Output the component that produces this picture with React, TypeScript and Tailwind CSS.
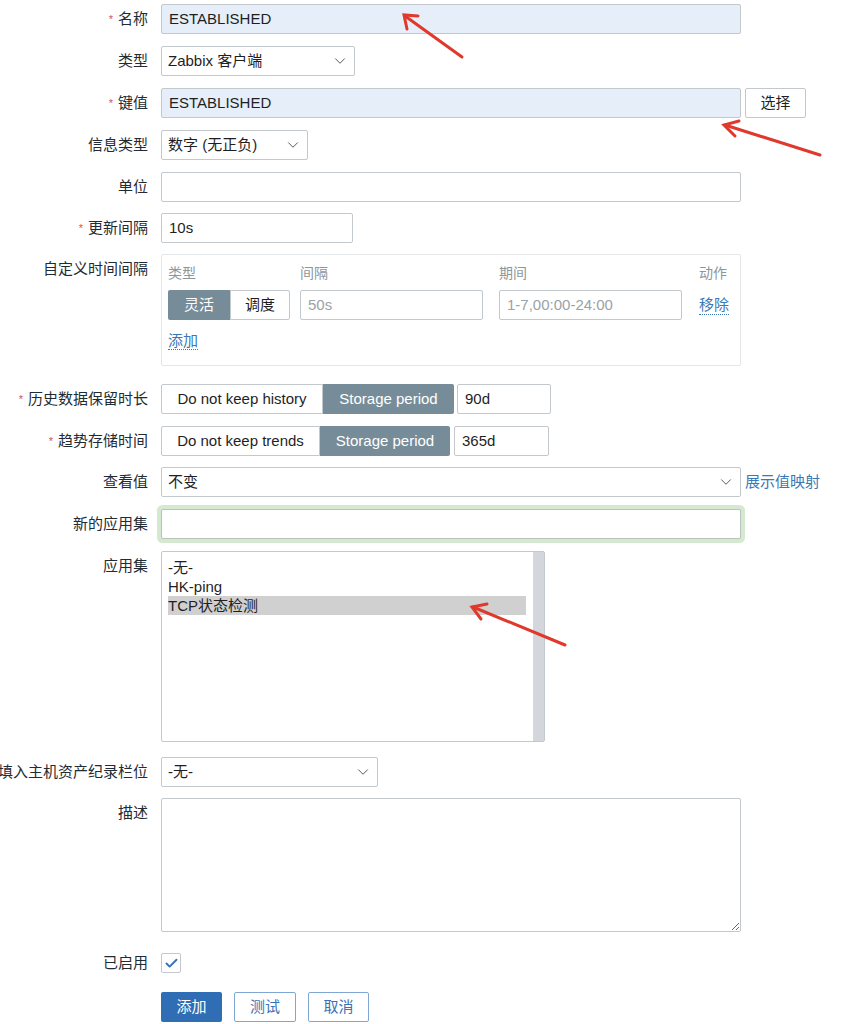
import { ChevronDown, Check } from 'lucide-react';
import type { ReactNode } from 'react';

const font = { fontFamily: '"Liberation Sans", "Noto Sans CJK SC", Arial, sans-serif' };

function Row({ label, required, className, children, labelLeading = 'leading-[30px]' }: {
  label: string;
  required?: boolean;
  className?: string;
  children: ReactNode;
  labelLeading?: string;
}) {
  return (
    <div className={`flex items-start ${className ?? ''}`}>
      <div className={`w-[148px] shrink-0 flex justify-end ${labelLeading}`}>
        <span className="shrink-0 whitespace-nowrap text-[15px] text-[#1f2c33]">
          {required && <span className="text-[#d9534f] text-[11px] align-top mr-[5px]">*</span>}
          {label}
        </span>
      </div>
      <div className="ml-[13px] flex items-start">{children}</div>
    </div>
  );
}

function Box({ w, blue, children, className }: { w: string; blue?: boolean; children?: ReactNode; className?: string }) {
  return (
    <div
      className={`${w} h-[30px] border border-[#c3c8cd] rounded-[2px] px-[7px] flex items-center text-[15px] text-[#1f1f1f] ${blue ? 'bg-[#e6eefa]' : 'bg-white'} ${className ?? ''}`}
    >
      {children}
    </div>
  );
}

function Select({ w, value }: { w: string; value: string }) {
  return (
    <div className={`${w} h-[30px] border border-[#c3c8cd] rounded-[2px] pl-[6px] pr-[5px] flex items-center justify-between bg-white text-[15px] text-[#1f1f1f]`}>
      <span>{value}</span>
      <ChevronDown size={18} strokeWidth={1.3} className="text-[#555]" />
    </div>
  );
}

function Segmented({ left, right, leftW, rightW }: { left: string; right: string; leftW: string; rightW: string }) {
  return (
    <div className="flex h-[30px] text-[15px]">
      <div className={`${leftW} border border-[#c3c8cd] rounded-l-[2px] flex items-center justify-center bg-white text-[#1f1f1f]`}>{left}</div>
      <div className={`${rightW} rounded-r-[2px] flex items-center justify-center bg-[#768d99] text-white`}>{right}</div>
    </div>
  );
}

export default function App() {
  return (
    <div className="relative w-[841px] h-[1024px] overflow-hidden bg-white" style={font}>
      <div className="flex flex-col pt-[4px]">
        <Row label="名称" required>
          <Box w="w-[580px]" blue>ESTABLISHED</Box>
        </Row>

        <Row label="类型" className="mt-3">
          <Select w="w-[194px]" value="Zabbix 客户端" />
        </Row>

        <Row label="键值" required className="mt-3">
          <Box w="w-[580px]" blue>ESTABLISHED</Box>
          <div className="ml-[4px] w-[61px] h-[30px] border border-[#c3c8cd] rounded-[2px] bg-white flex items-center justify-center text-[15px] text-[#1f1f1f]">
            选择
          </div>
        </Row>

        <Row label="信息类型" className="mt-3">
          <Select w="w-[147px]" value="数字 (无正负)" />
        </Row>

        <Row label="单位" className="mt-3">
          <Box w="w-[580px]" />
        </Row>

        <Row label="更新间隔" required className="mt-[11px]">
          <Box w="w-[192px]">10s</Box>
        </Row>

        <Row label="自定义时间间隔" className="mt-[11px]">
          <div className="w-[580px] h-[112px] border border-[#e4e7e9] rounded-[2px] pl-[6px] pt-[7px]">
            <div className="flex text-[14px] text-[#8d969c] h-[22px] items-center">
              <span className="w-[132px]">类型</span>
              <span className="w-[199px]">间隔</span>
              <span className="w-[200px]">期间</span>
              <span>动作</span>
            </div>
            <div className="flex items-center mt-[6px]">
              <div className="flex h-[30px] text-[15px] w-[122px]">
                <div className="w-[62px] rounded-l-[2px] bg-[#768d99] text-white flex items-center justify-center">灵活</div>
                <div className="w-[60px] border border-[#c3c8cd] rounded-r-[2px] bg-white text-[#1f1f1f] flex items-center justify-center">调度</div>
              </div>
              <div className="ml-[10px] w-[183px] h-[30px] border border-[#c3c8cd] rounded-[2px] px-[7px] flex items-center text-[15px] text-[#9aa2a8]">50s</div>
              <div className="ml-[16px] w-[183px] h-[30px] border border-[#c3c8cd] rounded-[2px] px-[7px] flex items-center text-[15px] text-[#9aa2a8]">1-7,00:00-24:00</div>
              <span className="ml-[17px] text-[15px] text-[#3a78b6] border-b border-dotted border-[#3a78b6] leading-[18px]">移除</span>
            </div>
            <div className="mt-[9px]">
              <span className="text-[15px] text-[#3a78b6] border-b border-dotted border-[#3a78b6] leading-[18px]">添加</span>
            </div>
          </div>
        </Row>

        <Row label="历史数据保留时长" required className="mt-[18px]">
          <Segmented left="Do not keep history" right="Storage period" leftW="w-[162px]" rightW="w-[131px]" />
          <Box w="w-[94px]" className="ml-[3px]">90d</Box>
        </Row>

        <Row label="趋势存储时间" required className="mt-3">
          <Segmented left="Do not keep trends" right="Storage period" leftW="w-[159px]" rightW="w-[130px]" />
          <Box w="w-[95px]" className="ml-[4px]">365d</Box>
        </Row>

        <Row label="查看值" className="mt-[11px]">
          <Select w="w-[580px]" value="不变" />
          <span className="ml-[4px] leading-[30px] text-[15px] text-[#3a78b6] whitespace-nowrap">展示值映射</span>
        </Row>

        <Row label="新的应用集" className="mt-3">
          <div className="w-[580px] h-[30px] border border-[#b9c2bb] rounded-[2px] bg-white shadow-[0_0_0_4px_#d5e8d0]" />
        </Row>

        <Row label="应用集" className="mt-3">
          <div className="w-[384px] h-[191px] border border-[#c3c8cd] rounded-[2px] bg-white flex">
            <div className="flex-1 pl-[6px] pr-[7px] pt-[6px] text-[15px] text-[#1f1f1f] leading-[19px]">
              <div>-无-</div>
              <div>HK-ping</div>
              <div className="bg-[#d0d0d0]">TCP状态检测</div>
            </div>
            <div className="w-[11px] bg-[#d3d7dc]" />
          </div>
        </Row>

        <Row label="填入主机资产纪录栏位" className="mt-[15px]">
          <Select w="w-[217px]" value="-无-" />
        </Row>

        <Row label="描述" className="mt-[11px]">
          <textarea className="w-[580px] h-[134px] border border-[#c3c8cd] rounded-[2px] bg-white outline-none" readOnly />
        </Row>

        <Row label="已启用" className="mt-[21px]" labelLeading="leading-[20px]">
          <div className="w-[20px] h-[20px] border border-[#c3c8cd] rounded-[2px] bg-white flex items-center justify-center">
            <Check size={15} strokeWidth={3} className="text-[#3570b8]" />
          </div>
        </Row>

        <div className="flex mt-[19px] ml-[161px] gap-[12px] text-[15px]">
          <div className="w-[61px] h-[30px] rounded-[2px] bg-[#2f6db4] text-white flex items-center justify-center">添加</div>
          <div className="w-[62px] h-[30px] rounded-[2px] border border-[#7fa6d4] bg-white text-[#3a72b6] flex items-center justify-center">测试</div>
          <div className="w-[61px] h-[30px] rounded-[2px] border border-[#7fa6d4] bg-white text-[#3a72b6] flex items-center justify-center">取消</div>
        </div>
      </div>

      {/* annotation arrows */}
      <svg className="absolute inset-0 pointer-events-none" width="841" height="1024">
        <g stroke="#e0392c" strokeWidth="3" strokeLinecap="round" fill="none">
          <line x1="462" y1="57" x2="405" y2="16" />
          <polyline points="407,29 404,15 418,16" />
          <line x1="820" y1="155" x2="725" y2="125" />
          <polyline points="735,136 724,125 739,121" />
          <line x1="565" y1="645" x2="473" y2="607" />
          <polyline points="481,619 472,607 487,604" />
        </g>
      </svg>
    </div>
  );
}
